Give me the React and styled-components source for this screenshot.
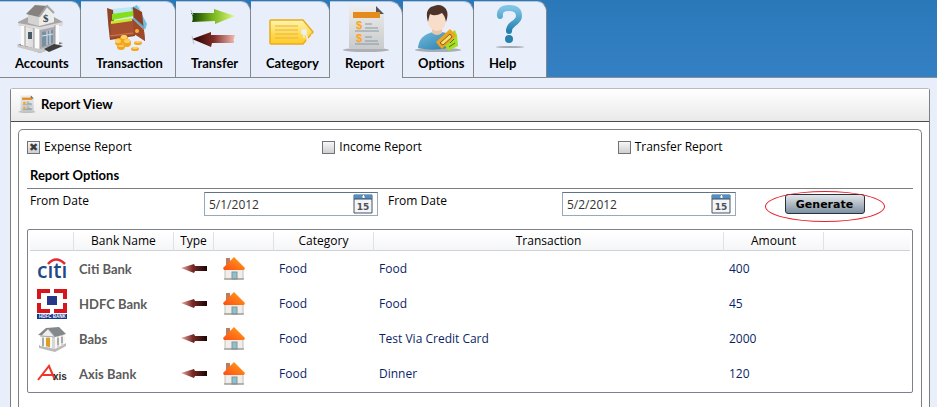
import React, { useState } from "react";
import styled, { createGlobalStyle } from "styled-components";

const rows = [
  { bank: "Citi Bank", logo: "citi", category: "Food", transaction: "Food", amount: 400 },
  { bank: "HDFC Bank", logo: "hdfc", category: "Food", transaction: "Food", amount: 45 },
  { bank: "Babs", logo: "babs", category: "Food", transaction: "Test Via Credit Card", amount: 2000 },
  { bank: "Axis Bank", logo: "axis", category: "Food", transaction: "Dinner", amount: 120 },
];

const AccountsIcon = () => (
  <Icon viewBox="0 0 48 48" aria-hidden="true">
    <defs>
      <linearGradient id="stone" x1="0" x2="1">
        <stop offset="0" stopColor="#f3f2f1" />
        <stop offset="1" stopColor="#a9a7a8" />
      </linearGradient>
    </defs>
    <path d="M1 40 L25 34 L47 38 L24 48 Z" fill="#777676" />
    <path d="M6 20 L24 24 L42 18 V40 L24 45 L6 40 Z" fill="url(#stone)" />
    <path d="M24 24 L42 18 V40 L24 45 Z" fill="#a9a9b0" />
    <path d="M2 17 L12 12 H38 L47 17 V20 L24 25 L2 20 Z" fill="#a8a6a5" />
    <path d="M2 18 L24 22 L47 17 V20 L24 25 L2 20 Z" fill="#dddbd9" />
    <path d="M12 9 V18 L23 21 L38 17 V9 L30 1 Z" fill="#d5d3d1" />
    <path d="M10 9 L19 0 L31 1 L23 12 Z" fill="#85817f" />
    <path d="M23 12 L31 1 L38 8 V17 L23 21 Z" fill="#ececeb" />
    <path d="M23 12 L31 1 L38 8" fill="none" stroke="#a6a4a3" strokeWidth="2" />
    <text x="27" y="17" fontFamily="Liberation Serif" fontWeight="bold" fontSize="11" fill="#34454f">$</text>
    <path d="M5 21 h4 v20 l-4 -1 Z M18 23 l5 1 v21 l-5 -1 Z M39 20 h4 v20 h-4 Z" fill="#fafafa" />
    <path d="M9 21 v20 M18 23 v21 M39 20 v20" stroke="#9d9b9b" />
    <rect x="12" y="27" width="4" height="7" fill="#475b67" />
    <path d="M26 27 L37 25 V38 L26 42 Z" fill="#7990a3" />
    <path d="M31 26 V40 M34 25 V39 M26 31 L37 29" stroke="#dce3e9" />
    <path d="M3 40 L24 44 L43 39 L46 41 L24 48 L1 42 Z" fill="#c9c7c6" />
    <path d="M28 44 L38 39 L47 41 L33 47 Z" fill="#3e3e3f" />
  </Icon>
);

const TransactionIcon = () => (
  <Icon viewBox="0 0 48 48" aria-hidden="true">
    <path d="M8 4 L36 1 L37 11 L9 15 Z" fill="#bce7f3" />
    <path d="M27 3 L33 0 L43 19 L41 25 Z" fill="#70bee0" />
    <path d="M3 3 L9 5 L10 17 L30 14 L31 31 L6 35 Q4 20 3 3 Z" fill="#8e4527" />
    <path d="M6 17 L30 15 V30 L7 33 Z" fill="#a75131" />
    <path d="M8 9 L29 6 V11 L8 15 Z" fill="#84df18" />
    <path d="M7 16 L28 13 V16 L7 19 Z" fill="#c4e82b" />
    <path d="M29 2 L38 7 L41 36 L30 28 Z" fill="#943e21" />
    <path d="M30 14 L40 25 L41 36 L30 29 Z" fill="#9e492b" />
    <path d="M30 15 L40 25 M5 31 L29 28" stroke="#cc7c51" />
    <path d="M29 13 L40 23" stroke="#62afd5" strokeWidth="2" />
    <circle cx="33" cy="26" r="2" fill="#ffb52c" />
    <g fill="#f3a51d">
      <ellipse cx="15" cy="37" rx="4" ry="4" /><ellipse cx="20" cy="34" rx="4" ry="4" />
      <ellipse cx="23" cy="38" rx="4" ry="4" /><ellipse cx="17" cy="42" rx="4" ry="3" />
      <ellipse cx="34" cy="38" rx="4" ry="2" /><ellipse cx="31" cy="44" rx="4" ry="2" />
    </g>
    <g fill="#ffd064">
      <ellipse cx="14" cy="36" rx="3" ry="2" /><ellipse cx="20" cy="32" rx="3" ry="2" />
      <ellipse cx="23" cy="36" rx="3" ry="2" /><ellipse cx="17" cy="41" rx="3" ry="1" />
      <ellipse cx="34" cy="37" rx="3" ry="1" /><ellipse cx="31" cy="43" rx="3" ry="1" />
    </g>
  </Icon>
);

const TransferIcon = () => (
  <Icon viewBox="0 0 48 48" aria-hidden="true">
    <defs>
      <linearGradient id="greenArrow">
        <stop offset="0" stopColor="#103b00" />
        <stop offset=".5" stopColor="#78b51b" />
        <stop offset="1" stopColor="#e0fa83" />
      </linearGradient>
      <linearGradient id="redArrow">
        <stop offset="0" stopColor="#230000" />
        <stop offset=".5" stopColor="#7e2c25" />
        <stop offset="1" stopColor="#f4bbb2" />
      </linearGradient>
    </defs>
    <path d="M2 8 L25 8 L25 4 L46 11 L26 19 V16 L3 17 Q5 12 2 8 Z" fill="url(#greenArrow)" />
    <path d="M46 30 L22 30 L22 27 L3 34 L22 42 L23 38 H45 Q44 34 46 30 Z" fill="url(#redArrow)" />
    <path d="M2 5 L4 10 M3 31 L5 39" stroke="#bbbdc4" />
  </Icon>
);

const CategoryIcon = () => (
  <Icon viewBox="0 0 48 48" aria-hidden="true">
    <defs>
      <linearGradient id="tag" x1="0" y1="0" x2="0" y2="1">
        <stop offset="0" stopColor="#fff6b0" />
        <stop offset=".6" stopColor="#ffd950" />
        <stop offset="1" stopColor="#ffcb2a" />
      </linearGradient>
    </defs>
    <path d="M5 15 H37 L47 27 L37 39 H5 Q4 39 4 38 V16 Q4 15 5 15 Z" fill="url(#tag)" stroke="#e9ac1c" strokeWidth="1.5" />
    <path d="M9 21 H32 M9 25 H32 M9 29 H32 M9 33 H32" stroke="#e5b340" />
    <circle cx="38" cy="27" r="3" fill="#e9eff9" />
    <path d="M38 28 V33 M40 29 L43 38 Q45 40 46 35 V29 M41 32 Q41 42 45 37" fill="none" stroke="#efede4" strokeWidth="1.5" />
  </Icon>
);

const ReportIcon = ({ small }) => (
  <Icon viewBox="0 0 48 48" $small={small} aria-hidden="true">
    <defs>
      <linearGradient id="paper" x1="0" y1="0" x2="0" y2="1">
        <stop offset="0" stopColor="#ededed" />
        <stop offset="1" stopColor="#c9cacb" />
      </linearGradient>
    </defs>
    <ellipse cx="24" cy="45" rx="23" ry="2" fill="#adafb5" />
    <path d="M7 1 H34 L42 9 V44 H7 Z" fill="url(#paper)" />
    <path d="M34 1 V9 H42 Z" fill="#55565a" />
    <rect x="11" y="7" width="27" height="6" fill="#e48b1c" />
    {small ? (
      <path d="M14 18 H20 V24 H14 Z M14 31 H20 V37 H14 Z" fill="#ffa317" />
    ) : (
      <g fontFamily="Liberation Sans" fontWeight="bold" fontSize="11" fill="#ffa317">
        <text x="14" y="24">$</text>
        <text x="14" y="37">$</text>
      </g>
    )}
    <path d="M23 19 H30 M23 23 H36 M13 26 H37 M23 32 H30 M23 36 H36 M13 39 H37" stroke="#8898a4" strokeWidth={small ? 2 : 1} />
  </Icon>
);

const OptionsIcon = () => (
  <Icon viewBox="0 0 48 48" aria-hidden="true">
    <defs>
      <linearGradient id="shirt" x1="0" y1="0" x2="1" y2="1">
        <stop offset="0" stopColor="#72bde0" />
        <stop offset="1" stopColor="#287ba9" />
      </linearGradient>
    </defs>
    <ellipse cx="24" cy="45" rx="23" ry="2" fill="#a7adb7" />
    <path d="M4 43 Q5 30 19 27 Q29 26 37 30 L38 42 Q20 47 4 43 Z" fill="url(#shirt)" />
    <path d="M18 22 H28 V28 Q23 32 18 28 Z" fill="#ecc5ad" />
    <ellipse cx="23" cy="16" rx="9" ry="10" fill="#f9ddcb" />
    <path d="M14 17 Q10 3 20 1 Q27 -2 32 4 Q35 9 32 17 Q31 11 28 8 Q21 12 16 9 Q15 12 14 17 Z" fill="#4e3329" />
    <path d="M33 31 L41 25 L43 30 L44 41 L34 46 L30 39 Z" fill="#a6dd26" />
    <path d="M22 37 L36 24 L39 27 L42 31 L28 44 L25 41 Z" fill="#f0a41d" />
    <path d="M26 38 L36 29 L38 32 L29 40 Z" fill="#fbdf69" stroke="#7c632a" />
    <path d="M36 38 L40 34 M35 42 L41 38" stroke="#536f15" />
  </Icon>
);

const HelpIcon = () => (
  <Icon viewBox="0 0 48 48" aria-hidden="true">
    <defs>
      <linearGradient id="help" x1="0" y1="0" x2="0" y2="1">
        <stop offset="0" stopColor="#7ec5e5" />
        <stop offset="1" stopColor="#2481af" />
      </linearGradient>
    </defs>
    <ellipse cx="24" cy="42" rx="14" ry="1" fill="#a5abb5" />
    <path d="M14 11 Q13 3 23 3 Q33 3 33 11 Q33 15 27 19 Q23 22 23 26" fill="none" stroke="url(#help)" strokeWidth="6" strokeLinecap="round" />
    <circle cx="23" cy="34" r="4" fill="#2880ac" />
  </Icon>
);

const tabs = [
  { label: "Accounts", icon: AccountsIcon, width: 81 },
  { label: "Transaction", icon: TransactionIcon, width: 95 },
  { label: "Transfer", icon: TransferIcon, width: 75 },
  { label: "Category", icon: CategoryIcon, width: 79 },
  { label: "Report", icon: ReportIcon, width: 73 },
  { label: "Options", icon: OptionsIcon, width: 71 },
  { label: "Help", icon: HelpIcon, width: 73 },
];

const BankLogo = ({ name }) => (
  <Logo viewBox="0 0 30 30" aria-hidden="true">
    {name === "citi" && (
      <>
        <text x="0" y="24" fontFamily="Open Sans" fontWeight="600" fontSize="21" fill="#1f4a86">cıtı</text>
        <path d="M11 10 Q19 1 28 10" fill="none" stroke="#e32b32" strokeWidth="2.5" />
      </>
    )}
    {name === "hdfc" && (
      <>
        <path d="M0 0 H30 V24 H0 Z" fill="#d8141c" />
        <path d="M4 4 H26 V20 H4 Z" fill="#fff" />
        <path d="M13 0 H17 V4 H13 Z M13 20 H17 V24 H13 Z M0 10 H5 V14 H0 Z M25 10 H30 V14 H25 Z" fill="#fff" />
        <path d="M10 7 H20 V16 H10 Z" fill="#293789" />
        <path d="M0 25 H30 V30 H0 Z" fill="#12378b" />
        <text x="2" y="29" fontFamily="Liberation Sans" fontWeight="bold" fontSize="4.5" fill="#fff">HDFC BANK</text>
      </>
    )}
    {name === "babs" && (
      <>
        <path d="M2 21 L18 25 L29 19 V22 L18 28 L2 24 Z" fill="#bbb9b8" />
        <path d="M3 11 L18 13 L27 10 V21 L18 25 L3 22 Z" fill="#d8d7d5" />
        <path d="M1 11 L9 4 L22 3 L29 10 L18 13 Z" fill="#83888c" />
        <path d="M4 12 L11 5 L18 13 Z" fill="#eee" stroke="#aaa" />
        <path d="M4 13 V22 M8 13 V23 M14 13 V24 M19 13 V24 M23 12 V22 M27 11 V20" stroke="#f7f7f6" strokeWidth="2" />
        <path d="M6 14 V22 M12 14 V23 M21 14 V21 M25 13 V19" stroke="#777d82" />
        <path d="M9 14 H13 V23 L9 22 Z" fill="#daa01f" />
      </>
    )}
    {name === "axis" && (
      <>
        <path d="M1 21 L12 7 L18 21 M5 16 H18" fill="none" stroke="#ed3727" strokeWidth="2" />
        <text x="16" y="21" fontFamily="Liberation Sans" fontWeight="bold" fontSize="10" fill="#303030">xis</text>
      </>
    )}
  </Logo>
);

const ExpenseArrow = () => (
  <Arrow viewBox="0 0 26 12" role="img" aria-label="Expense">
    <defs>
      <linearGradient id="expense">
        <stop offset="0" stopColor="#edaba3" />
        <stop offset=".45" stopColor="#782a25" />
        <stop offset="1" stopColor="#1b0605" />
      </linearGradient>
    </defs>
    <path d="M0 5 L13 1 L14 3 H26 V8 H14 L13 10 Z" fill="url(#expense)" />
  </Arrow>
);

const HouseIcon = () => (
  <House viewBox="0 0 24 24" aria-hidden="true">
    <defs>
      <linearGradient id="roof" x1="0" y1="1" x2="1" y2="0">
        <stop offset="0" stopColor="#ff4c13" />
        <stop offset="1" stopColor="#ffa51c" />
      </linearGradient>
    </defs>
    <rect x="4" y="1" width="4" height="8" fill="#b77e62" />
    <path d="M3 12 H21 V22 H3 Z" fill="#efeeeb" stroke="#c2c0bd" />
    <path d="M12 0 L23 11 L22 13 H2 L1 11 Z" fill="url(#roof)" />
    <rect x="10" y="15" width="5" height="7" fill="#82c5d8" stroke="#9a8d86" />
    <path d="M2 22 H22" stroke="#8b8884" />
  </House>
);

const CalendarIcon = () => (
  <Calendar viewBox="0 0 20 20" aria-hidden="true">
    <path d="M1 1 H19 V19 H1 Z" fill="#f4f5f7" stroke="#4d535c" />
    <path d="M1 1 H19 V5 H1 Z" fill="#4c91cb" />
    <path d="M1 5 H19" stroke="#444b55" />
    <path d="M9 3 H12 M10.5 1 V4" stroke="#fff" />
    <text x="10" y="16" textAnchor="middle" fontFamily="DejaVu Sans" fontWeight="bold" fontSize="9" fill="#4b5058">15</text>
  </Calendar>
);

const DateField = ({ id, value, onChange }) => (
  <DateBox>
    <DateInput id={id} value={value} onChange={(e) => onChange(e.target.value)} />
    <CalendarButton type="button" aria-label="Show calendar">
      <CalendarIcon />
    </CalendarButton>
  </DateBox>
);

const App = () => {
  const [active, setActive] = useState("Report");
  const [from, setFrom] = useState("5/1/2012");
  const [to, setTo] = useState("5/2/2012");
  return (
    <Page>
      <GlobalStyle />
      <TabBar>
        {tabs.map(({ label, icon: TabIcon, width }) => (
          <Tab
            key={label}
            type="button"
            $width={width}
            $active={active === label}
            onClick={() => setActive(label)}
          >
            <TabIcon />
            <TabLabel>{label}</TabLabel>
          </Tab>
        ))}
      </TabBar>
      <Panel>
        <PanelHeader>
          <ReportIcon small />
          <Title>Report View</Title>
        </PanelHeader>
        <PanelBody>
          <ReportTypes>
            <CheckLabel><Check type="checkbox" defaultChecked />Expense Report</CheckLabel>
            <CheckLabel><Check type="checkbox" />Income Report</CheckLabel>
            <CheckLabel><Check type="checkbox" />Transfer Report</CheckLabel>
          </ReportTypes>
          <SectionTitle>Report Options</SectionTitle>
          <OptionsForm onSubmit={(e) => e.preventDefault()}>
            <FieldLabel htmlFor="from">From Date</FieldLabel>
            <DateField id="from" value={from} onChange={setFrom} />
            <FieldLabel htmlFor="to" $spaced>From Date</FieldLabel>
            <DateField id="to" value={to} onChange={setTo} />
            <GenerateWrap>
              <GenerateButton type="submit">Generate</GenerateButton>
            </GenerateWrap>
          </OptionsForm>
          <TableFrame>
            <Table>
              <colgroup>
                <Col $width={44} />
                <Col $width={100} />
                <Col $width={40} />
                <Col $width={60} />
                <Col $width={100} />
                <Col $width={350} />
                <Col $width={100} />
                <Col />
              </colgroup>
              <thead>
                <tr>
                  <HeadCell />
                  <HeadCell>Bank Name</HeadCell>
                  <HeadCell>Type</HeadCell>
                  <HeadCell />
                  <HeadCell>Category</HeadCell>
                  <HeadCell>Transaction</HeadCell>
                  <HeadCell>Amount</HeadCell>
                  <HeadCell />
                </tr>
              </thead>
              <tbody>
                {rows.map((row) => (
                  <tr key={row.bank}>
                    <IconCell><BankLogo name={row.logo} /></IconCell>
                    <BankCell>{row.bank}</BankCell>
                    <IconCell><ExpenseArrow /></IconCell>
                    <IconCell $start><HouseIcon /></IconCell>
                    <Cell>{row.category}</Cell>
                    <Cell>{row.transaction}</Cell>
                    <Cell>{row.amount}</Cell>
                    <Cell />
                  </tr>
                ))}
              </tbody>
            </Table>
          </TableFrame>
        </PanelBody>
      </Panel>
    </Page>
  );
};

const GlobalStyle = createGlobalStyle`
  * {
    box-sizing: border-box;
  }
  body {
    margin: 0;
    font-family: "Open Sans", "Noto Sans", sans-serif;
    font-size: 12px;
    line-height: 16px;
    color: #000;
  }
  button,
  input {
    font-family: inherit;
    font-size: inherit;
  }
`;
const Page = styled.div`
  display: flex;
  flex-direction: column;
  min-height: 100vh;
  background: #e8effa;
`;
const TabBar = styled.nav`
  display: flex;
  height: 78px;
  padding-top: 1px;
  background: linear-gradient(#2b78b9, #3480c4);
  box-shadow: inset 0 -1px #8a8d92;
`;
const Tab = styled.button`
  display: flex;
  flex-direction: column;
  align-items: center;
  width: ${(p) => p.$width}px;
  padding: 3px 0 0;
  border: solid #858789;
  border-width: 1px 1px ${(p) => (p.$active ? 0 : 1)}px 0;
  border-top-color: #b5c4d6;
  border-radius: 0 ${(p) => (p.$active ? 14 : 10)}px 0 0;
  background: #e8effa;
  color: #000;
  cursor: pointer;
`;
const TabLabel = styled.span`
  align-self: flex-start;
  padding-left: 15px;
  font-family: Lato, sans-serif;
  font-size: 13px;
  font-weight: 700;
  line-height: 20px;
`;
const Icon = styled.svg`
  flex: none;
  width: ${(p) => (p.$small ? 18 : 48)}px;
  height: ${(p) => (p.$small ? 20 : 48)}px;
`;

const Panel = styled.section`
  display: flex;
  flex: 1;
  flex-direction: column;
  margin: 10px 7px 0 10px;
  border: 1px solid #7d7f83;
  border-top-color: #b9bbbf;
  border-bottom: 0;
  border-radius: 3px 3px 0 0;
  background: #fff;
`;
const PanelHeader = styled.header`
  display: flex;
  align-items: center;
  gap: 5px;
  height: 33px;
  padding: 0 7px 2px;
  border-bottom: 1px solid #4c4c4c;
  background: linear-gradient(#fff, #e9e9e9);
`;
const Title = styled.h1`
  margin: 0;
  font-family: Lato, sans-serif;
  font-size: 13px;
  font-weight: 700;
  line-height: 20px;
`;
const PanelBody = styled.div`
  flex: 1;
  margin: 7px 7px 0;
  padding: 8px 8px 0;
  border: 1px solid #7d7f83;
  border-bottom: 0;
  border-radius: 5px 5px 0 0;
`;

const ReportTypes = styled.div`
  display: grid;
  grid-template-columns: repeat(3, 1fr);
`;
const CheckLabel = styled.label`
  display: flex;
  align-items: center;
  gap: 4px;
  height: 18px;
`;
const Check = styled.input`
  appearance: none;
  display: flex;
  align-items: center;
  justify-content: center;
  width: 13px;
  height: 13px;
  margin: 0;
  border: 1px solid #70747a;
  background: linear-gradient(#f6f6f6, #cfcfcf);

  &:checked::before {
    content: "✖";
    font-family: "DejaVu Sans", sans-serif;
    font-size: 11px;
    line-height: 11px;
    color: #3c3c3c;
  }
`;
const SectionTitle = styled.h2`
  margin: 9px 0 0;
  padding: 0 3px 3px;
  border-bottom: 1px solid #7d7f83;
  font-family: Lato, sans-serif;
  font-size: 13px;
  font-weight: 700;
  line-height: 20px;
`;
const OptionsForm = styled.form`
  display: grid;
  grid-template-columns:
    minmax(0, 174fr) minmax(0, 174fr) minmax(0, 184fr)
    minmax(0, 174fr) minmax(0, 177fr);
  padding: 3px 0 0 3px;
`;
const FieldLabel = styled.label`
  padding-left: ${(p) => (p.$spaced ? 10 : 0)}px;
  line-height: 18px;
`;
const DateBox = styled.div`
  display: flex;
  align-items: center;
  height: 24px;
  padding: 0 4px;
  border: 1px solid #9aa9b8;
  border-top-color: #5f7488;
  background: #fff;
`;
const DateInput = styled.input`
  flex: 1;
  min-width: 0;
  padding: 0;
  border: 0;
  outline: 0;
  background: none;
  color: #333;
`;
const CalendarButton = styled.button`
  display: flex;
  padding: 0;
  border: 0;
  background: none;
  cursor: pointer;
`;
const Calendar = styled.svg`
  width: 20px;
  height: 20px;
`;
const GenerateWrap = styled.div`
  position: relative;
  display: flex;
  align-items: center;
  justify-content: center;

  &::after {
    content: "";
    position: absolute;
    top: -1px;
    left: 50%;
    width: 118px;
    height: 29px;
    border: 1px solid #e8202c;
    border-radius: 50%;
    transform: translateX(-50%);
    pointer-events: none;
  }
`;
const GenerateButton = styled.button`
  width: 80px;
  height: 20px;
  padding: 0;
  border: 1px solid #27323d;
  border-radius: 3px;
  background: linear-gradient(#e2e6e9, #b1bbc4 50%, #7d90a1);
  font-family: "DejaVu Sans", sans-serif;
  font-size: 11px;
  font-weight: bold;
  cursor: pointer;

  &:hover {
    opacity: 0.8;
  }
`;

const TableFrame = styled.div`
  margin-top: 13px;
  padding: 2px 2px 1px;
  border: 1px solid #7d818b;
  border-radius: 2px;
`;
const Table = styled.table`
  width: 100%;
  table-layout: fixed;
  border-spacing: 0;
`;
const Col = styled.col`
  width: ${(p) => (p.$width ? `${p.$width}px` : "auto")};
`;
const HeadCell = styled.th`
  height: 19px;
  padding: 0;
  border-right: 1px solid #dfe1e4;
  border-bottom: 1px solid #d0d2d5;
  background: linear-gradient(#fff, #f5f6f7);
  font-weight: normal;
  line-height: 18px;

  &:last-child {
    border-right: 0;
  }
`;
const Cell = styled.td`
  height: 35px;
  padding: 0 5px;
  color: #0b1f66;
`;
const BankCell = styled(Cell)`
  font-family: Lato, sans-serif;
  font-size: 13px;
  font-weight: 700;
  color: #5b5b5b;
`;
const IconCell = styled.td`
  height: 35px;
  padding: 0 ${(p) => (p.$start ? 8 : 7)}px;
`;
const Logo = styled.svg`
  display: block;
  width: 30px;
  height: 30px;
`;
const Arrow = styled.svg`
  display: block;
  width: 26px;
  height: 12px;
`;
const House = styled.svg`
  display: block;
  width: 24px;
  height: 24px;
`;

export default App;
